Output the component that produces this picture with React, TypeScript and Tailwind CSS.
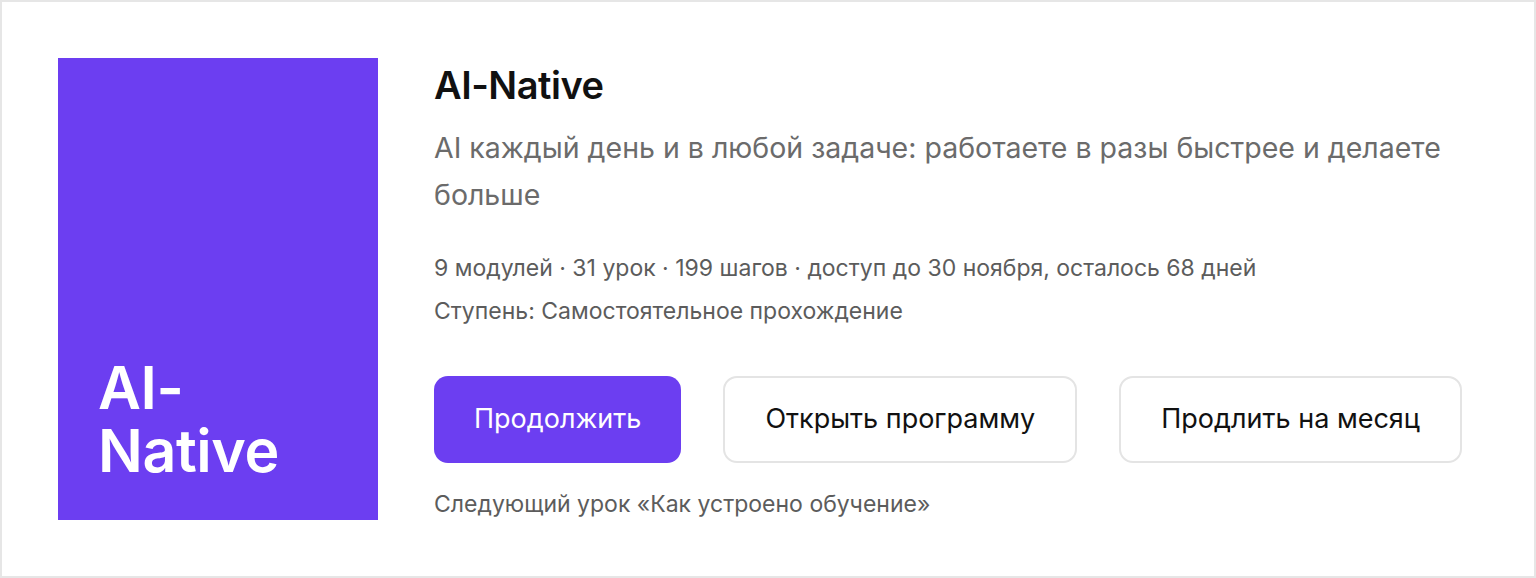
export default function App() {
  const meta = ["9 модулей", "31 урок", "199 шагов", "доступ до 30 ноября, осталось 68 дней"];

  return (
    <div className="w-[1536px] h-[578px] bg-white border-2 border-[#e6e6e6] font-['Inter','Noto_Sans',sans-serif]">
      <div className="flex gap-[56px] pl-[56px] pr-[60px] pt-[56px]">
        {/* cover */}
        <div className="w-[320px] h-[462px] shrink-0 bg-[#6c3ef1] flex flex-col justify-end px-[40px] pb-[38px] text-white text-[59px] font-semibold leading-[63px] tracking-[-0.4px]">
          <span>AI-</span>
          <span>Native</span>
        </div>

        {/* course info */}
        <div className="flex-1 flex flex-col pt-[5px]">
          <h1 className="text-[38px] font-semibold leading-[44px] text-[#111] tracking-[-0.5px]">AI-Native</h1>
          <p className="mt-[17px] max-w-[1030px] text-[28.5px] leading-[47px] text-[#6b6b6b]">
            AI каждый день и в любой задаче: работаете в разы быстрее и делаете больше
          </p>
          <p className="mt-[35px] text-[23px] leading-[30px] text-[#5c5c5c]">{meta.join(" · ")}</p>
          <p className="mt-[13px] text-[23px] leading-[30px] text-[#5c5c5c]">Ступень: Самостоятельное прохождение</p>

          <div className="mt-[50px] flex gap-[42px]">
            <button className="h-[87px] shrink-0 whitespace-nowrap px-[40px] rounded-[14px] bg-[#6c3ef1] text-white text-[27px]">
              Продолжить
            </button>
            <button className="h-[87px] shrink-0 whitespace-nowrap px-[40px] rounded-[14px] border-2 border-[#e4e4e4] bg-white text-[#111] text-[27px]">
              Открыть программу
            </button>
            <button className="h-[87px] shrink-0 whitespace-nowrap px-[40px] rounded-[14px] border-2 border-[#e4e4e4] bg-white text-[#111] text-[27px]">
              Продлить на месяц
            </button>
          </div>

          <p className="mt-[26px] text-[23px] leading-[30px] text-[#5c5c5c]">Следующий урок «Как устроено обучение»</p>
        </div>
      </div>
    </div>
  );
}
